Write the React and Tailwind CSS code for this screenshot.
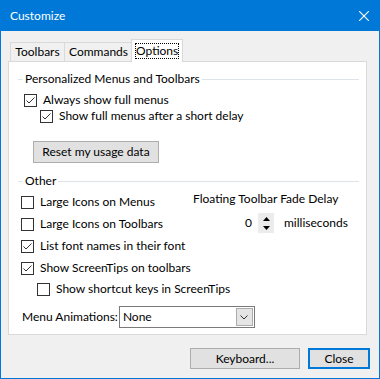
// Customize dialog – Options tab

const FONT = { fontFamily: 'Lato, "Noto Sans", sans-serif' }

function CheckBox({ checked }) {
  return (
    <span className="w-[13px] h-[13px] shrink-0 border border-[#333333] bg-white flex items-center justify-center">
      {checked && (
        <svg width="11" height="11" viewBox="0 0 11 11">
          <path d="M1.5 5.5 L4 8 L9.5 2.5" fill="none" stroke="#333333" strokeWidth="1" />
        </svg>
      )}
    </span>
  )
}

function CheckRow({ checked, label, indent = 0, h = 'h-[22px]' }) {
  return (
    <div className={`flex items-center gap-[6px] whitespace-nowrap ${h}`} style={{ paddingLeft: indent }}>
      <CheckBox checked={checked} />
      <span className="leading-none">{label}</span>
    </div>
  )
}

function GroupHeader({ children }) {
  return (
    <div className="flex items-center h-[16px] pl-[9px] pr-[7px] whitespace-nowrap">
      <div className="w-[5px] h-px bg-[#dce3ea]" />
      <span className="px-[2px] leading-none">{children}</span>
      <div className="flex-1 h-px bg-[#dce3ea]" />
    </div>
  )
}

function Tab({ label, active, w }) {
  if (active) {
    return (
      <div className={`relative z-10 h-[23px] -mx-[2px] px-[3px] pt-[3px] bg-white border border-b-0 border-[#d9d9d9] ${w}`}>
        <span className="leading-[14px] border border-dotted border-black block text-center">{label}</span>
      </div>
    )
  }
  return (
    <div className={`h-[19px] mt-[3px] pt-[1px] bg-[#f0f0f0] border border-b-0 border-[#d9d9d9] -ml-px first:ml-0 leading-[16px] text-center whitespace-nowrap ${w}`}>
      {label}
    </div>
  )
}

export default function App() {
  return (
    <div className="w-[380px] h-[379px] flex flex-col bg-[#f0f0f0] text-[12px] text-black overflow-hidden" style={FONT}>
      {/* title bar */}
      <div className="h-[31px] bg-[#0078d7] flex items-center justify-between pl-[10px] pr-[11px] text-white">
        <span className="text-[12px] leading-none">Customize</span>
        <svg width="10" height="10" viewBox="0 0 10 10">
          <path d="M0 0 L10 10 M10 0 L0 10" stroke="white" strokeWidth="1.1" />
        </svg>
      </div>

      <div className="flex-1 flex flex-col border-x border-b border-[#0078d7] px-[7px]">
        {/* tabs */}
        <div className="flex h-[23px] mt-[8px] pl-[2px]">
          <Tab label="Toolbars" w="w-[55px]" />
          <Tab label="Commands" w="w-[69px]" />
          <Tab label="Options" w="w-[52px]" active />
        </div>

        {/* panel */}
        <div className="-mt-px w-[359px] h-[274px] bg-white border border-[#d9d9d9] flex flex-col">
          <div className="mt-[9px]">
            <GroupHeader>Personalized Menus and Toolbars</GroupHeader>
          </div>
          <div className="mt-[5px] pl-[15px]">
            <CheckRow checked label="Always show full menus" h="h-[16px]" />
            <CheckRow checked label="Show full menus after a short delay" indent={16} h="h-[16px]" />
          </div>
          <div className="mt-[17px] pl-[24px]">
            <button className="w-[126px] h-[22px] bg-[#e1e1e1] border border-[#adadad] leading-none whitespace-nowrap">Reset my usage data</button>
          </div>

          <div className="mt-[10px]">
            <GroupHeader>Other</GroupHeader>
          </div>

          <div className="mt-[2px] flex">
            <div className="w-[184px] pl-[12px]">
              <CheckRow label="Large Icons on Menus" />
              <CheckRow label="Large Icons on Toolbars" />
              <CheckRow checked label="List font names in their font" />
              <CheckRow checked label="Show ScreenTips on toolbars" />
              <CheckRow label="Show shortcut keys in ScreenTips" indent={16} h="h-[20px]" />
            </div>
            <div className="flex-1 flex flex-col whitespace-nowrap">
              <div className="h-[16px] leading-none flex items-center">Floating Toolbar Fade Delay</div>
              <div className="mt-[6px] h-[20px] flex items-center">
                <span className="w-[65px] text-right pr-[6px] leading-none">0</span>
                <div className="w-[16px] h-[20px] bg-[#ececec] flex flex-col items-center justify-center gap-[5px]">
                  <svg width="7" height="4" viewBox="0 0 7 4"><path d="M3.5 0 L7 4 L0 4 Z" fill="#000" /></svg>
                  <svg width="7" height="4" viewBox="0 0 7 4"><path d="M0 0 L7 0 L3.5 4 Z" fill="#000" /></svg>
                </div>
                <span className="ml-[10px] leading-none">milliseconds</span>
              </div>
            </div>
          </div>

          <div className="mt-[7px] flex items-center pl-[13px] whitespace-nowrap">
            <span className="shrink-0 mr-[1px] leading-none">Menu Animations:</span>
            <div className="w-[136px] h-[22px] border border-[#7a7a7a] bg-white flex items-center">
              <span className="flex-1 pl-[3px] leading-none">None</span>
              <div className="w-[17px] h-[18px] mr-px bg-[#e5e5e5] border border-[#acacac] flex items-center justify-center">
                <svg width="8" height="5" viewBox="0 0 8 5"><path d="M0.5 0.5 L4 4 L7.5 0.5" fill="none" stroke="#333" strokeWidth="1" /></svg>
              </div>
            </div>
          </div>
        </div>

        {/* bottom buttons */}
        <div className="flex justify-end gap-[8px] mt-[13px] pr-[2px]">
          <button className="w-[110px] h-[21px] bg-[#e1e1e1] border border-[#adadad] leading-none">Keyboard...</button>
          <button className="w-[62px] h-[21px] bg-[#e1e1e1] border-2 border-[#0078d7] leading-none">Close</button>
        </div>
      </div>
    </div>
  )
}
